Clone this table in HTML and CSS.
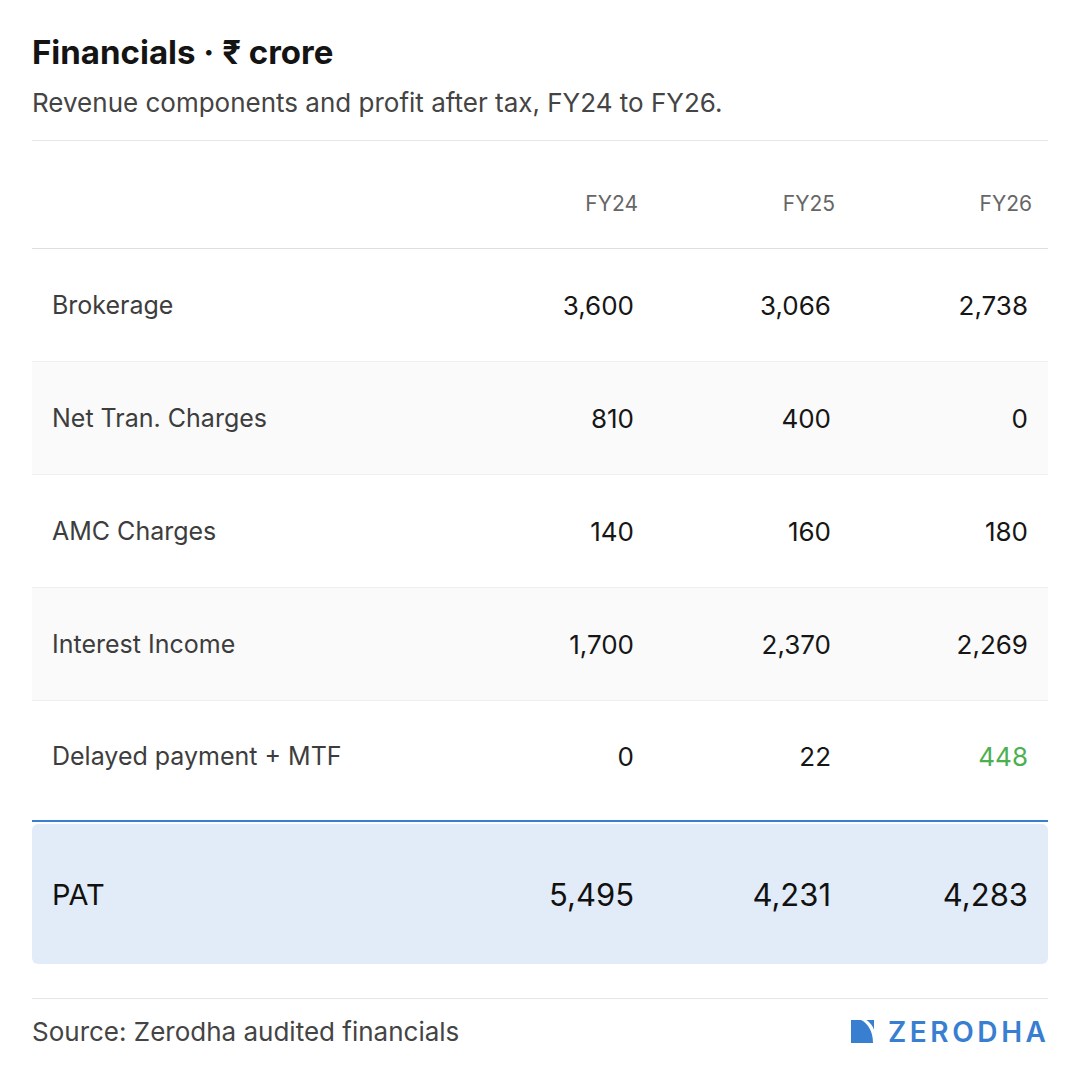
FILE: index.html
```html
<!DOCTYPE html>
<html lang="en">
<head>
<meta charset="utf-8">
<title>Financials</title>
<link rel="stylesheet" href="styles.css">
</head>
<body>
<div class="page">
  <header class="head">
    <h1 class="title">Financials · ₹ crore</h1>
    <p class="subtitle">Revenue components and profit after tax, FY24 to FY26.</p>
  </header>
  <div class="table">
    <div class="row row-head">
      <div class="cell label"></div>
      <div class="cell num">FY24</div>
      <div class="cell num">FY25</div>
      <div class="cell num">FY26</div>
    </div>
    <div class="row">
      <div class="cell label">Brokerage</div>
      <div class="cell num">3,600</div>
      <div class="cell num">3,066</div>
      <div class="cell num">2,738</div>
    </div>
    <div class="row alt">
      <div class="cell label">Net Tran. Charges</div>
      <div class="cell num">810</div>
      <div class="cell num">400</div>
      <div class="cell num">0</div>
    </div>
    <div class="row">
      <div class="cell label">AMC Charges</div>
      <div class="cell num">140</div>
      <div class="cell num">160</div>
      <div class="cell num">180</div>
    </div>
    <div class="row alt">
      <div class="cell label">Interest Income</div>
      <div class="cell num">1,700</div>
      <div class="cell num">2,370</div>
      <div class="cell num">2,269</div>
    </div>
    <div class="row last">
      <div class="cell label">Delayed payment + MTF</div>
      <div class="cell num">0</div>
      <div class="cell num">22</div>
      <div class="cell num up">448</div>
    </div>
    <div class="total-wrap">
      <div class="row total">
        <div class="cell label">PAT</div>
        <div class="cell num">5,495</div>
        <div class="cell num">4,231</div>
        <div class="cell num">4,283</div>
      </div>
    </div>
  </div>
  <footer class="foot">
    <span class="source">Source: Zerodha audited financials</span>
    <span class="brand">
      <svg class="brand-mark" viewBox="0 0 23 23" width="23" height="23" aria-hidden="true">
        <path d="M0 0 H10 C16.5 3 22 11 22 23 H0 Z" fill="#387ed1"/>
        <path d="M15.5 0 H23 V9.7 C21.5 5.5 19 2.5 15.5 0 Z" fill="#387ed1"/>
      </svg>
      <span class="brand-name">ZERODHA</span>
    </span>
  </footer>
</div>
</body>
</html>
```

FILE: styles.css
```css
* { box-sizing: border-box; }
html, body { margin: 0; padding: 0; background: #ffffff; }
body {
  font-family: Inter, "Noto Sans", "Liberation Sans", sans-serif;
  color: #111;
  width: 1080px;
  height: 1080px;
  overflow: hidden;
}
.page {
  padding: 32px 32px 0 32px;
}
.head {
  padding-bottom: 21px;
  border-bottom: 1px solid #e6e6e6;
}
.title {
  margin: 0;
  font-size: 33px;
  line-height: 40px;
  font-weight: 700;
  color: #141414;
}
.subtitle {
  margin: 15px 0 0 0;
  font-size: 26px;
  line-height: 32px;
  color: #444;
  font-weight: 400;
}
.table { display: flex; flex-direction: column; }
.row {
  display: grid;
  grid-template-columns: 425px 197px 197px 197px;
  height: 113px;
  align-items: center;
  border-bottom: 1px solid #efefef;
}
.row.alt { background: #fafafa; }
.row.last { border-bottom: none; height: 119px; padding-bottom: 9px; }
.cell { padding: 0 20px; }
.label { font-size: 25px; color: #3d3d3d; }
.num {
  text-align: right;
  font-size: 26px;
  color: #161616;
}
.up { color: #4caf50; }
.row-head {
  height: 108px;
  align-items: end;
  padding-bottom: 32px;
  border-bottom: 1px solid #dedede;
}
.row-head .num { font-size: 21px; line-height: 24px; color: #666; padding-right: 16px; }
.total-wrap {
  border-top: 2px solid #387ed1;
  padding-top: 2px;
}
.total {
  height: 140px;
  background: #e2ecf8;
  border-radius: 6px;
  border-bottom: none;
}
.total .label { font-size: 29px; color: #111; }
.total .num { font-size: 31px; color: #111; }
.foot {
  margin-top: 34px;
  border-top: 1px solid #e6e6e6;
  display: flex;
  justify-content: space-between;
  align-items: center;
  height: 66px;
}
.source { font-size: 26px; color: #444; }
.brand { display: flex; align-items: center; gap: 14px; padding-right: 2px; }
.brand-mark { display: block; }
.brand-name {
  font-size: 28px;
  font-weight: 600;
  color: #387ed1;
  letter-spacing: 3.6px;
  margin-right: -3.6px;
}
```
